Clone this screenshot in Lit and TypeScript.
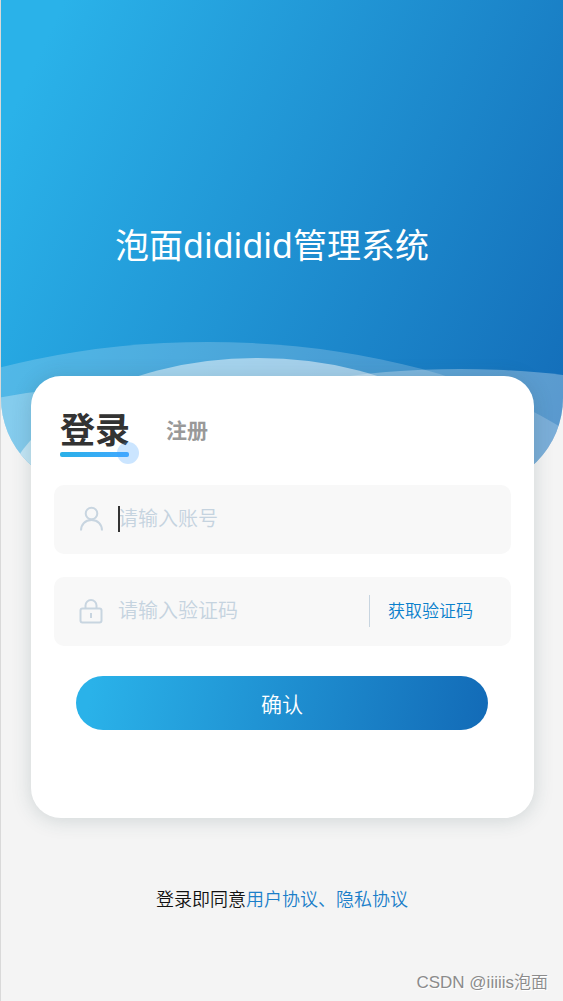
import { LitElement, html, css } from "lit";
import { customElement, state } from "lit/decorators.js";

@customElement("app-root")
export class AppRoot extends LitElement {
  @state() private account = "";
  @state() private code = "";

  static styles = css`
    :host {
      display: block;
      min-height: 100vh;
      box-sizing: border-box;
      border-left: 1px solid #d9d9d9;
      background: #f4f4f4;
      font-family: "Noto Sans", "Noto Sans CJK SC", sans-serif;
      color: #111;
    }
    * { box-sizing: border-box; }
    button, input {
      font: inherit;
      color: inherit;
      margin: 0;
      padding: 0;
      border: 0;
      background: none;
    }
    button { cursor: pointer; }
    a { color: #1b7fc9; text-decoration: none; }
    .page {
      position: relative;
      display: flex;
      flex-direction: column;
      min-height: 100vh;
    }
    .hero {
      display: grid;
      height: 488px;
      overflow: hidden;
      border-radius: 0 0 90px 90px;
      background: linear-gradient(115deg, #2ab2e9 8%, #136cb8 98%);
    }
    .waves, .title { grid-area: 1 / 1; }
    .waves { display: block; width: 100%; height: 488px; }
    .title {
      margin: 0;
      padding: 222px 20px 0 0;
      text-align: center;
      font-size: 34px;
      line-height: 46px;
      font-weight: 400;
      color: #fff;
    }
    .card {
      position: relative;
      margin: -112px 29px 0 30px;
      padding: 30px 23px 88px;
      border-radius: 30px;
      background: #fff;
      box-shadow: 0 2px 20px rgba(40, 70, 80, 0.18);
    }
    .tabs {
      display: flex;
      align-items: center;
      gap: 36px;
      height: 51px;
      margin: 0 6px 28px;
    }
    .tab {
      height: 51px;
      padding-bottom: 3px;
      font-weight: 700;
      font-size: 21px;
      line-height: 48px;
      color: #999;
    }
    .tab.active {
      position: relative;
      font-size: 35px;
      color: #333;
    }
    .bar, .dot { position: absolute; }
    .bar {
      left: 0;
      right: 1px;
      bottom: 0;
      height: 5px;
      border-radius: 2px;
      background: linear-gradient(90deg, #2ab0e8, #40a9ff);
    }
    .dot {
      right: -9px;
      bottom: -7px;
      width: 22px;
      height: 22px;
      border-radius: 50%;
      background: rgba(64, 160, 255, 0.27);
    }
    .field {
      display: flex;
      align-items: center;
      height: 69px;
      margin-bottom: 23px;
      padding: 0 24px 2px;
      border-radius: 10px;
      background: #f8f8f8;
    }
    .icon {
      flex: none;
      width: 26px;
      height: 26px;
      fill: none;
      stroke: #c8d5e0;
      stroke-width: 2;
    }
    .box {
      position: relative;
      display: flex;
      flex: 1;
      min-width: 0;
      margin-left: 14px;
    }
    .input {
      width: 100%;
      height: 30px;
      font-size: 20px;
      font-weight: 350;
      line-height: 30px;
      color: #333;
      outline: none;
    }
    .input::placeholder { color: #c5d3df; opacity: 1; }
    .caret {
      position: absolute;
      left: 0;
      top: 2px;
      width: 2px;
      height: 26px;
      background: #333;
    }
    .send {
      flex: none;
      height: 32px;
      margin-right: 14px;
      padding-left: 18px;
      border-left: 1px solid #c8d5e0;
      font-size: 17px;
      font-weight: 350;
      line-height: 32px;
      color: #0a80cc;
    }
    .submit {
      display: block;
      width: calc(100% - 45px);
      height: 54px;
      margin: 30px 23px 0 22px;
      border-radius: 27px;
      background: linear-gradient(100deg, #2ab2e9 4%, #136cb8 98%);
      font-size: 21px;
      font-weight: 350;
      color: #fff;
    }
    .terms {
      margin: 67px 0 0;
      text-align: center;
      font-size: 18px;
      font-weight: 350;
      line-height: 28px;
    }
    .mark {
      margin: auto 15px 5px 0;
      text-align: right;
      font-family: "Liberation Sans", "Noto Sans CJK SC", sans-serif;
      font-size: 17px;
      font-weight: 350;
      line-height: 26px;
      color: #8b8b8b;
      text-shadow: 1px 1px 0 #fff;
    }
  `;

  render() {
    return html`
      <main class="page">
        <header class="hero">
          <svg class="waves" viewBox="0 0 562 488" preserveAspectRatio="none" aria-hidden="true" fill="#fff">
            <ellipse cx="207" cy="567" rx="450" ry="225" opacity="0.2" />
            <ellipse cx="100" cy="508" rx="260" ry="120" opacity="0.3" />
            <ellipse cx="459" cy="529" rx="380" ry="160" opacity="0.3" />
            <ellipse cx="257" cy="518" rx="260" ry="160" opacity="0.5" />
          </svg>
          <h1 class="title">泡面dididid管理系统</h1>
        </header>
        <form class="card" @submit=${(e: Event) => e.preventDefault()}>
          <nav class="tabs">
            <button type="button" class="tab active">登录<span class="bar"></span><span class="dot"></span></button>
            <button type="button" class="tab">注册</button>
          </nav>
          <div class="field">
            <svg class="icon" viewBox="0 0 26 26" aria-hidden="true">
              <circle cx="13.5" cy="7.5" r="5.8" />
              <path d="M3 24.5C3 18.4 7.2 14 13.5 14S24 18.4 24 24.5" />
            </svg>
            <div class="box">
              <input class="input" type="text" aria-label="账号" placeholder="请输入账号" .value=${this.account}
                @input=${(e: Event) => (this.account = (e.target as HTMLInputElement).value)} />
              <span class="caret"></span>
            </div>
          </div>
          <div class="field">
            <svg class="icon" viewBox="0 0 26 26" aria-hidden="true">
              <rect x="2.5" y="10.5" width="21" height="14" rx="2" />
              <path d="M7.5 10.5V7.5a5.5 5.5 0 0 1 11 0v3M13 15v5" />
            </svg>
            <div class="box">
              <input class="input" type="text" aria-label="验证码" placeholder="请输入验证码" .value=${this.code}
                @input=${(e: Event) => (this.code = (e.target as HTMLInputElement).value)} />
            </div>
            <button type="button" class="send">获取验证码</button>
          </div>
          <button type="submit" class="submit">确认</button>
        </form>
        <p class="terms">登录即同意<a href="#terms">用户协议、</a><a href="#privacy">隐私协议</a></p>
        <footer class="mark">CSDN @iiiiis泡面</footer>
      </main>
    `;
  }
}
